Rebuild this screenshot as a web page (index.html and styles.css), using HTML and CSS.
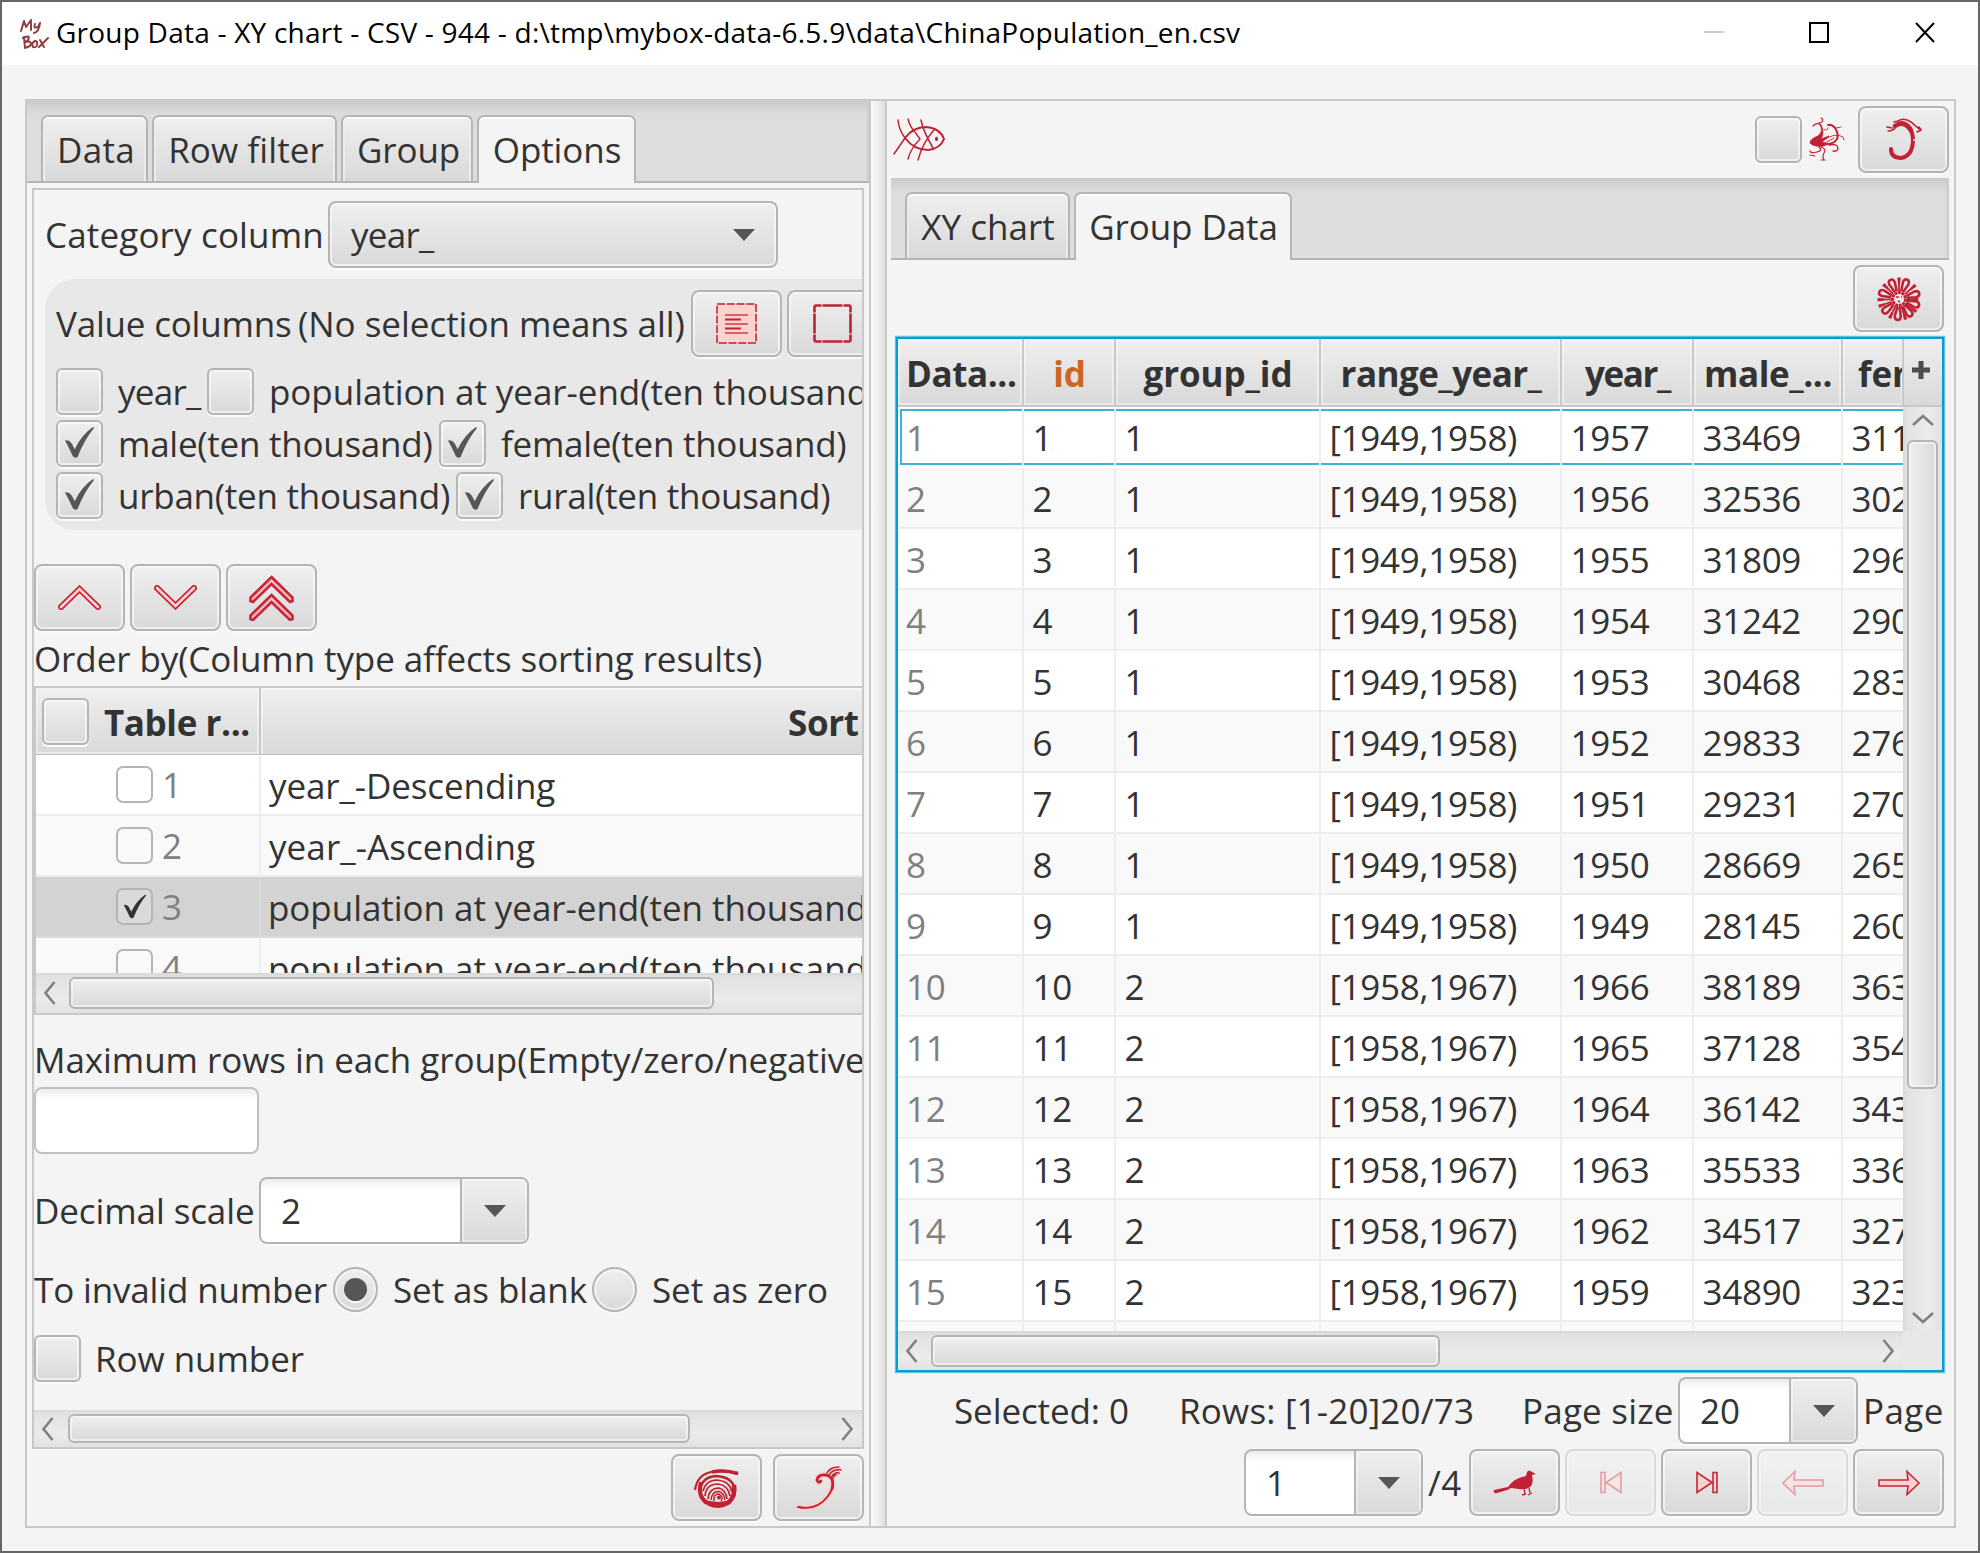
FILE: index.html
```html
<!DOCTYPE html>
<html lang="en">
<head>
<meta charset="utf-8">
<title>Group Data</title>
<link rel="stylesheet" href="styles.css">
</head>
<body>
<svg width="0" height="0" class="defs">
  <defs>
    <symbol id="check" viewBox="0 0 32 34"><path d="M1 15 Q5 14 8 18 L11 24 Q18 9 30 1 L31 2 Q21 14 14 32 Q11 34 9 31 Q6 24 1 15z" fill="currentColor"/></symbol>
    <symbol id="left" viewBox="0 0 13 24"><path d="M11.500 1 L2.500 12 L11.500 23" fill="none" stroke="#808080" stroke-width="2.600"/></symbol>
    <symbol id="right" viewBox="0 0 13 24"><path d="M1.500 1 L10.500 12 L1.500 23" fill="none" stroke="#808080" stroke-width="2.600"/></symbol>
    <g id="loop"><path d="M-1-8L-3-17Q-3-21 0-21Q3-21 3-17L1-8" fill="none" stroke="#c32034" stroke-width="2.500"/></g>
    <g id="spoke"><path d="M0-8V-19" stroke="#c32034" stroke-width="1.800"/><path d="M-1.800-21.500H1.800L1-15H-1z" fill="#c32034"/></g>
  </defs>
</svg>
<div class="window">
  <header class="titlebar">
    <svg class="logo" width="30" height="32" viewBox="0 0 30 32" fill="none" stroke="#8e3f42" stroke-width="2" stroke-linecap="round" stroke-linejoin="round"><path d="M1 13 L4 3 L6 9 L11 2 L11 12 M15 6 Q13 11 18 9 L20 5 Q19 14 14 15 M4 19 L5 30 M3 20 Q11 16 8 22 L5 24 Q13 22 10 28 L5 30 M15 23 Q11 25 13 29 Q18 30 17 24 Q16 22 14 24 M20 22 L24 29 M28 20 L19 29"/></svg>
    <span class="title">Group Data - XY chart - CSV - 944 - d:\tmp\mybox-data-6.5.9\data\ChinaPopulation_en.csv</span>
    <svg class="winctl" width="232" height="22" viewBox="0 0 232 22" fill="none"><path d="M0 10h20" stroke="#ccc" stroke-width="2"/><path d="M106 1h18v19h-18z" stroke="#000" stroke-width="2"/><path d="M212 1l18 19M230 1l-18 19" stroke="#000" stroke-width="2"/></svg>
  </header>

  <main class="split">
    <section class="left">
      <nav class="tabs">
        <div class="tab w-data">Data</div><div class="tab w-filter">Row filter</div><div class="tab w-group">Group</div><div class="tab on w-options">Options</div>
      </nav>
      <div class="scrollpane">
        <div class="line category"><span class="lab">Category column</span><div class="combo plain"><span class="us">year_</span><i class="arrow"></i></div></div>
        <div class="values">
          <div class="line vhead"><span class="lab v1">Value columns</span><span class="lab v2">(No selection means all)</span>
            <button class="btn"><svg width="41" height="41" viewBox="0 0 41 41"><path d="M1 1h39v39h-39z" fill="#fad3ce"/><path d="M1 1h39v39h-39z" fill="none" stroke="#d2495a" stroke-width="2" stroke-dasharray="8 1.750"/><path d="M9 12h23M9 21h23M9 30h23" stroke="#d96070" stroke-width="2"/><path d="M9 16.500h16M9 25.500h16" stroke="#c32034" stroke-width="1.800"/></svg></button>
            <button class="btn"><svg width="39" height="39" viewBox="0 0 39 39"><path d="M1.500 1.500h36v36h-36z" fill="none" stroke="#c32034" stroke-width="2.600" stroke-dasharray="7 1 20 1 7 0"/></svg></button>
          </div>
          <div class="line cb-row"><i class="cb"></i><span class="clab c-year us">year_</span><i class="cb"></i><span class="clab c-pop">population at year-end(ten thousand</span></div>
          <div class="line cb-row"><i class="cb"><svg width="31" height="33"><use href="#check"/></svg></i><span class="clab c-male">male(ten thousand)</span><i class="cb"><svg width="31" height="33"><use href="#check"/></svg></i><span class="clab">female(ten thousand)</span></div>
          <div class="line cb-row"><i class="cb"><svg width="31" height="33"><use href="#check"/></svg></i><span class="clab c-urban">urban(ten thousand)</span><i class="cb"><svg width="31" height="33"><use href="#check"/></svg></i><span class="clab">rural(ten thousand)</span></div>
        </div>
        <div class="line order-btns">
          <button class="btn"><svg width="43" height="25" viewBox="0 0 43 25" fill="none" stroke-linecap="round"><path d="M3 22L21.500 4L40 22" stroke="#c8253a" stroke-width="6"/><path d="M3 22L21.500 4L40 22" stroke="#fad3ce" stroke-width="2.600"/></svg></button>
          <button class="btn"><svg width="43" height="25" viewBox="0 0 43 25" fill="none" stroke-linecap="round"><path d="M3 3L21.500 21L40 3" stroke="#c8253a" stroke-width="6"/><path d="M3 3L21.500 21L40 3" stroke="#fad3ce" stroke-width="2.600"/></svg></button>
          <button class="btn"><svg width="45" height="46" viewBox="0 0 45 46" fill="#f6bdba" stroke="#c8253a" stroke-width="2.600"><path d="M22.500 2L43.500 22.500V26L41 27L22.500 9L4 27L1.500 26V22.500z"/><path d="M22.500 20L43.500 40.500V44L41 45L22.500 27L4 45L1.500 44V40.500z"/></svg></button>
        </div>
        <div class="caption">Order by(Column type affects sorting results)</div>
        <div class="sort-table">
          <div class="sort-head"><div class="sh1"><i class="cb"></i><b>Table r...</b></div><div class="sh2"><b>Sort</b></div></div>
          <div class="sort-body">
            <div class="srow"><div class="sc1"><i class="scb"></i>1</div><div class="sc2">year_-Descending</div></div>
            <div class="srow even"><div class="sc1"><i class="scb"></i>2</div><div class="sc2 asc">year_-Ascending</div></div>
            <div class="srow sel"><div class="sc1"><i class="scb"><svg width="24" height="27"><use href="#check"/></svg></i>3</div><div class="sc2 pop">population at year-end(ten thousand</div></div>
            <div class="srow even"><div class="sc1"><i class="scb"></i>4</div><div class="sc2 pop">population at year-end(ten thousand</div></div>
          </div>
          <div class="hscroll h40"><svg width="13" height="24"><use href="#left"/></svg><div class="thumb t1"></div></div>
        </div>
        <div class="caption max">Maximum rows in each group(Empty/zero/negative</div>
        <div class="field"></div>
        <div class="line gap23"><span class="lab l-dec">Decimal scale</span><div class="combo edit"><span>2</span><div class="drop"><i class="arrow"></i></div></div></div>
        <div class="line gap23 invalid"><span class="lab l-inv">To invalid number</span><i class="radio on"></i><span class="rlab r1">Set as blank</span><i class="radio"></i><span class="rlab">Set as zero</span></div>
        <div class="line gap23 rownum"><i class="cb"></i><span class="clab l-row">Row number</span></div>
        <div class="hscroll h37"><svg width="13" height="24"><use href="#left"/></svg><div class="thumb t2"></div><svg class="end" width="13" height="24"><use href="#right"/></svg></div>
      </div>
      <div class="left-actions">
        <button class="btn"><svg width="45" height="40" viewBox="0 0 45 40" fill="none" stroke="#c32034" stroke-linecap="butt"><path d="M1 22Q3 7 17 4Q29 1 44 6" stroke-width="2.200"/><path d="M18 4Q30 1.500 44 5.500" stroke-width="3.400"/><path d="M6 22Q8 9 22 8Q39 9 41 22Q41 32 33 36" stroke-width="2.400"/><path d="M7 14Q3 28 13 35" stroke-width="4"/><path d="M40 17Q42 28 34 35" stroke-width="4.500"/><path d="M9 23Q12 12 23 12Q36 13 38 24" stroke-width="1.700"/><path d="M11 28Q12 16 24 16Q34 17 36 28" stroke-width="1.700"/><path d="M14 31Q15 20 25 20Q32 22 33 31" stroke-width="1.700"/><path d="M17 32Q18 23 25 23.500Q30 25 31 32" stroke-width="1.500"/><path d="M20 33Q19 26 25 26Q30 29 27 33" stroke-width="1.400"/><circle cx="25" cy="29.500" r="2" fill="#c32034" stroke="none"/><path d="M8 31Q12 40 25 40Q36 39 39 31Q25 37 8 31z" fill="#c32034" stroke="none"/></svg></button>
        <button class="btn"><svg width="46" height="46" viewBox="0 0 46 46" fill="none" stroke-linecap="round"><path d="M3 43Q21 44 32 31Q40 20 35 14Q30 7 24 11Q20 14 23 18" stroke="#fad3ce" stroke-width="6"/><path d="M32 9Q36 3 43 4M36 12L42 8" stroke="#fad3ce" stroke-width="5"/><path d="M2 42Q21 46 32 31Q39 21 36 15" stroke="#c32034" stroke-width="1.900"/><path d="M36 24Q39 12 30 10Q22 9 21 15Q22 19 25 16" stroke="#c32034" stroke-width="2.800"/><path d="M31 8Q34 2 43 2M33 10Q37 4 45 5M36 11Q39 7 43 8M37 13Q38 10 40 10" stroke="#c32034" stroke-width="1.500"/></svg></button>
      </div>
    </section>

    <div class="divider"></div>

    <section class="right">
      <div class="topbar">
        <svg width="54" height="46" viewBox="0 0 54 46" fill="none" stroke="#c32034" stroke-linecap="round"><path d="M12 21Q20 10 33 10Q47 11 51 22Q47 32 35 33Q21 33 12 21z" stroke-width="2"/><path d="M5 3Q6 13 12 21M1 37L12 21" stroke-width="1.500"/><path d="M15 2Q17 10 22 15L27 22L21 29Q16 37 15 42" stroke-width="1.400"/><path d="M28 3Q30 14 40 31M41 13Q30 25 25 43" stroke-width="1.500"/><ellipse cx="43.500" cy="22" rx="1.500" ry="2.200" fill="#c32034" stroke="none"/></svg>
        <i class="cb push"></i>
        <svg class="phoenix" width="37" height="46" viewBox="63 17 37 46" fill="none" stroke="#c32034" stroke-linecap="round"><path d="M75 25Q79 31 73 36Q65 39 65 43Q69 47 76 46L81 43L77 42L84 36L76 39Q80 32 76 25z" fill="#c32034" stroke-width=".8"/><path d="M68 26Q72 22 76 25M76 18Q79 19 77 22L74 23" stroke-width="1.200"/><path d="M83 25Q87 24 90 28Q94 34 92 39Q89 44 82 44L76 46" stroke-width="2"/><path d="M79 29Q82 32 83 28M79 40Q90 32 98 37L99 40M91 28L96 27M80 43L89 38" stroke-width=".9"/><path d="M84 45Q93 43 93 49Q92 52 88 51" stroke-width="1.300"/><path d="M76 47Q82 49 79 53Q77 57 79 60M76 60L80 60M74 47Q78 51 72 52Q66 54 65 51M65 55L70 56" stroke-width="1.200"/></svg>
        <button class="btn dragon"><svg width="36" height="43" viewBox="142 18 36 43" fill="none" stroke="#c32034" stroke-linecap="round"><path d="M147 49Q147 58 157 58Q169 56 169 39Q168 25 158 23" stroke-width="4"/><path d="M151 26Q159 20 166 29" stroke-width="4.500"/><path d="M143 27L148 28M144 31Q150 31 152 26M150 22L154 21Q160 17 167 22L175 29M175 27L177 30L173 32" stroke-width="1.600"/><circle cx="170" cy="40" r="1" fill="#eee" stroke="none"/></svg></button>
      </div>
      <nav class="tabs tabs-r"><div class="tab w-xy">XY chart</div><div class="tab on w-gd">Group Data</div></nav>
      <div class="toolbar"><button class="btn"><svg width="46" height="46" viewBox="-23 -23 46 46">
        <use href="#spoke"/><use href="#loop" transform="rotate(23)"/><use href="#spoke" transform="rotate(50)"/><use href="#loop" transform="rotate(74)"/><use href="#spoke" transform="rotate(92) scale(.9)"/><use href="#loop" transform="rotate(108)"/><use href="#spoke" transform="rotate(126)"/><use href="#loop" transform="rotate(144)"/><use href="#spoke" transform="rotate(162)"/><use href="#loop" transform="rotate(184)"/><use href="#spoke" transform="rotate(206)"/><use href="#loop" transform="rotate(230)"/><use href="#spoke" transform="rotate(250)"/><use href="#spoke" transform="rotate(268)"/><use href="#loop" transform="rotate(290)"/><use href="#spoke" transform="rotate(313)"/><use href="#loop" transform="rotate(336)"/>
        <circle r="6.500" stroke="#c32034" stroke-width="3" stroke-dasharray="3 .6" fill="#f4e9e9"/><path d="M-3-2H0M2-2H3M-1 2L1 3" stroke="#c32034" stroke-width="1.500"/></svg></button></div>
      <div class="table">
        <div class="thead">
          <div class="row">
            <b class="th first">Data...</b><b class="th key">id</b><b class="th">group_id</b><b class="th us2">range_year_</b><b class="th us">year_</b><b class="th first m">male_...</b><b class="th fem">fem</b>
          </div>
          <div class="plus"><svg width="18" height="18" viewBox="0 0 18 18"><path d="M6.500 0h5v6.500H18v5h-6.500V18h-5v-6.500H0v-5h6.500z" fill="#4d4d4d"/></svg></div>
        </div>
        <div class="tmid">
          <div class="tbody">
            <div class="row focus"><span>1</span><span>1</span><span>1</span><span>[1949,1958)</span><span>1957</span><span>33469</span><span>311</span></div>
            <div class="row"><span>2</span><span>2</span><span>1</span><span>[1949,1958)</span><span>1956</span><span>32536</span><span>302</span></div>
            <div class="row"><span>3</span><span>3</span><span>1</span><span>[1949,1958)</span><span>1955</span><span>31809</span><span>296</span></div>
            <div class="row"><span>4</span><span>4</span><span>1</span><span>[1949,1958)</span><span>1954</span><span>31242</span><span>290</span></div>
            <div class="row"><span>5</span><span>5</span><span>1</span><span>[1949,1958)</span><span>1953</span><span>30468</span><span>283</span></div>
            <div class="row"><span>6</span><span>6</span><span>1</span><span>[1949,1958)</span><span>1952</span><span>29833</span><span>276</span></div>
            <div class="row"><span>7</span><span>7</span><span>1</span><span>[1949,1958)</span><span>1951</span><span>29231</span><span>270</span></div>
            <div class="row"><span>8</span><span>8</span><span>1</span><span>[1949,1958)</span><span>1950</span><span>28669</span><span>265</span></div>
            <div class="row"><span>9</span><span>9</span><span>1</span><span>[1949,1958)</span><span>1949</span><span>28145</span><span>260</span></div>
            <div class="row"><span>10</span><span>10</span><span>2</span><span>[1958,1967)</span><span>1966</span><span>38189</span><span>363</span></div>
            <div class="row"><span>11</span><span>11</span><span>2</span><span>[1958,1967)</span><span>1965</span><span>37128</span><span>354</span></div>
            <div class="row"><span>12</span><span>12</span><span>2</span><span>[1958,1967)</span><span>1964</span><span>36142</span><span>343</span></div>
            <div class="row"><span>13</span><span>13</span><span>2</span><span>[1958,1967)</span><span>1963</span><span>35533</span><span>336</span></div>
            <div class="row"><span>14</span><span>14</span><span>2</span><span>[1958,1967)</span><span>1962</span><span>34517</span><span>327</span></div>
            <div class="row"><span>15</span><span>15</span><span>2</span><span>[1958,1967)</span><span>1959</span><span>34890</span><span>323</span></div>
            <div class="row"><span></span><span></span><span></span><span></span><span></span><span></span><span></span></div>
          </div>
          <div class="vscroll">
            <svg width="22" height="12" viewBox="0 0 22 12"><path d="M1 11L11 2L21 11" fill="none" stroke="#808080" stroke-width="2.600"/></svg>
            <div class="vthumb"></div>
            <svg class="vend" width="22" height="12" viewBox="0 0 22 12"><path d="M1 1L11 10L21 1" fill="none" stroke="#808080" stroke-width="2.600"/></svg>
          </div>
        </div>
        <div class="tfoot"><div class="hscroll h39"><svg width="13" height="24"><use href="#left"/></svg><div class="thumb t3"></div><svg class="end" width="13" height="24"><use href="#right"/></svg></div></div>
      </div>
      <div class="foot f1">
        <span class="f-sel">Selected: 0</span><span class="f-rows">Rows: [1-20]20/73</span><span class="f-ps">Page size</span>
        <div class="combo edit size"><span>20</span><div class="drop"><i class="arrow"></i></div></div><span class="f-page">Page</span>
      </div>
      <div class="foot f2">
        <div class="combo edit page"><span>1</span><div class="drop"><i class="arrow"></i></div></div><span class="f-of">/4</span>
        <button class="btn"><svg width="44" height="27" viewBox="0 0 44 27"><path d="M1 21L15 18Q21 9 33 7L34 3Q36 0 39 3L43 5L39 6Q41 15 37 18Q33 21 26 20L18 19L14 21L4 24Q0 25 1 21z" fill="#c32034"/><path d="M31 20L32 25M36 19L37 24M29 26L33 25M35 26L39 24" stroke="#c32034" stroke-width="1.300"/></svg></button>
        <button class="btn off"><svg width="22" height="27" viewBox="0 -2.500 22 27" fill="#fad3ce" stroke="#c8253a" stroke-width="1.600"><path d="M1 1h4v20h-4zM21 1v20L6 11z"/></svg></button>
        <button class="btn"><svg width="22" height="27" viewBox="0 -2.500 22 27" fill="#fad3ce" stroke="#c8253a" stroke-width="1.600"><path d="M17 1h4v20h-4zM1 1v20L16 11z"/></svg></button>
        <button class="btn off"><svg width="42" height="26" viewBox="0 0 42 26" fill="#fad3ce" stroke="#c8253a" stroke-width="1.600"><path d="M1 13L13 1.500L12 10H41V16H12L13 24.500z"/></svg></button>
        <button class="btn"><svg width="42" height="26" viewBox="0 0 42 26" fill="#fad3ce" stroke="#c8253a" stroke-width="1.600"><path d="M41 13L29 1.500L30 10H1V16H30L29 24.500z"/></svg></button>
      </div>
    </section>
  </main>
</div>
</body>
</html>
```
FILE: styles.css
```css
* { box-sizing: border-box; }
body { margin: 0; width: 1980px; height: 1553px; overflow: hidden; font-family: "Open Sans", "Noto Sans", sans-serif; font-size: 35px; letter-spacing: -0.1px; color: #333; white-space: nowrap; }
svg, i { display: block; flex: none; }
.defs { position: absolute; }
.window { width: 1980px; height: 1553px; border: 2px solid #666; background: #f4f4f4; display: flex; flex-direction: column; }
.titlebar { height: 63px; flex: none; background: #fff; display: flex; align-items: center; padding-left: 18px; color: #000; }
.logo { margin-right: 6px; }
.title { font-size: 28px; letter-spacing: 0.23px; line-height: 61px; height: 63px; }
.winctl { margin: -2px 42px 0 auto; }

.split { display: flex; margin: 34px 22px 0 23px; height: 1429px; border: 2px solid #c8c8c8; }
.left { width: 842px; flex: none; display: flex; flex-direction: column; }
.divider { width: 18px; flex: none; border: solid #c8c8c8; border-width: 0 2px; background: linear-gradient(90deg, #fafafa, #f0f0f0 40%, #dedede); }
.right { flex: 1; min-width: 0; display: flex; flex-direction: column; }

.tabs { height: 82px; flex: none; display: flex; gap: 4px; padding: 14px 0 0 14px; background: linear-gradient(#cbcbcb, #ddd 14px); box-shadow: inset 0 -2px 0 #b5b5b5, inset -3px 0 2px -1px #ccc; }
.tab { height: 66px; line-height: 66px; text-align: center; padding-left: 3px; border: 2px solid #b5b5b5; border-bottom: 0; border-radius: 7px 7px 0 0; background: linear-gradient(#efefef, #d9d9d9); box-shadow: inset 0 2px 0 #fafafa, inset 2px 0 0 #ececec, inset -2px 0 0 #ececec; }
.tab.on { height: 68px; background: #f4f4f4; box-shadow: inset 0 2px 0 #fff; }
.w-data { width: 107px; letter-spacing: 0.3px; } .w-filter { width: 185px; letter-spacing: 0.1px; } .w-group { width: 132px; } .w-options { width: 159px; padding-left: 1px; }
.tabs-r { margin: 0 5px 0 4px; }
.tabs-r .tab { padding-left: 1px; }
.w-xy { width: 165px; letter-spacing: 0.02px; } .w-gd { width: 218px; }

.scrollpane { margin: 5px 5px 0; height: 1261px; flex: none; border: 2px solid #c8c8c8; overflow: hidden; display: flex; flex-direction: column; }
.scrollpane > * { flex: none; }
.line { display: flex; align-items: center; }
.lab { flex: none; }
.btn { font: inherit; width: 91px; height: 67px; flex: none; padding: 0; border: 2px solid #b5b5b5; border-radius: 8px; background: linear-gradient(#efefef, #d9d9d9); box-shadow: inset 0 0 0 2px rgba(250,250,250,.65), 0 2px 0 #fafafa; display: flex; align-items: center; justify-content: center; }
.btn.off { opacity: .42; }
.category { margin-top: 11px; padding-left: 11px; height: 67px; }
.category .lab { width: 283px; letter-spacing: 0.15px; }
.combo { height: 67px; flex: none; border: 2px solid #b5b5b5; border-radius: 8px; display: flex; align-items: center; justify-content: space-between; box-shadow: 0 2px 0 #fafafa; }
.combo.plain { width: 450px; padding: 0 21px; background: linear-gradient(#efefef, #d9d9d9); box-shadow: inset 0 0 0 2px rgba(250,250,250,.65), 0 2px 0 #fafafa; }
.us { letter-spacing: -0.75px; }
.arrow { border: 11px solid transparent; border-top: 12px solid #565656; border-bottom: 0; }
.combo.edit { width: 270px; background: linear-gradient(#ececec, #fff 10px); overflow: hidden; }
.combo.edit > span { padding-left: 20px; }
.drop { width: 67px; height: 100%; border-left: 2px solid #b5b5b5; background: linear-gradient(#efefef, #d9d9d9); box-shadow: inset 0 0 0 2px rgba(250,250,250,.5); display: flex; align-items: center; justify-content: center; }

.values { margin: 11px 0 0 11px; width: 860px; height: 251px; padding: 11px; background: #e8e8e8; border-radius: 30px; }
.vhead { height: 67px; margin-bottom: 11px; }
.v1 { width: 242px; letter-spacing: -0.2px; }
.v2 { width: 393px; letter-spacing: -0.03px; }
.vhead .btn { margin-right: 5px; }
.cb { width: 47px; height: 47px; border: 2px solid #b5b5b5; border-radius: 6px; background: linear-gradient(#efefef, #d9d9d9); box-shadow: inset 0 0 0 2px rgba(250,250,250,.65), 0 2px 0 #fafafa; display: flex; align-items: center; justify-content: center; color: #565656; }
.cb svg { margin-bottom: 2px; }
.cb-row { height: 47px; margin-bottom: 5px; }
.clab { padding-left: 15px; flex: none; letter-spacing: -0.26px; }
.c-year { width: 104px; padding-left: 15px; letter-spacing: -0.75px; } .c-male { width: 336px; } .c-urban { width: 353px; } .c-pop { letter-spacing: -0.05px; }

.order-btns { margin-top: 34px; gap: 5px; height: 67px; }
.caption { height: 55px; line-height: 56px; letter-spacing: -0.1px; }
.caption.max { margin-top: 17px; padding-left: 0; letter-spacing: -0.06px; }
.sort-table { height: 329px; border: solid #c8c8c8; border-width: 2px 0 2px 2px; display: flex; flex-direction: column; overflow: hidden; }
.sort-head { display: flex; height: 67px; flex: none; border-bottom: 1px solid #c0c0c0; background: linear-gradient(#efefef, #d9d9d9); }
.sort-head b { letter-spacing: -0.4px; padding-top: 2px; }
.sh1 { width: 225px; flex: none; display: flex; align-items: center; padding-left: 6px; border-right: 2px solid #c8c8c8; box-shadow: inset 0 0 0 2px rgba(250,250,250,.5); }
.sh1 b { padding-left: 15px; }
.sh2 { flex: 1; display: flex; align-items: center; padding-left: 527px; box-shadow: inset 2px 2px 0 rgba(250,250,250,.6); }
.sort-body { height: 218px; flex: none; overflow: hidden; }
.srow { display: flex; height: 61px; background: #fff; border-bottom: 2px solid #ededed; line-height: 62px; }
.srow.even { background: #f9f9f9; }
.srow.sel { background: #d3d3d3; border-color: #dadada; }
.sc1 { width: 225px; flex: none; border-right: 2px solid #ededed; padding-left: 80px; display: flex; align-items: center; gap: 9px; color: #808080; }
.sel .sc1 { border-color: #dadada; }
.sc2 { flex: 1; overflow: hidden; padding-left: 8px; }
.sc2.asc { letter-spacing: 0.08px; }
.sc2.pop { letter-spacing: -0.05px; padding-left: 7px; }
.scb { width: 37px; height: 37px; border: 2px solid #b5b5b5; border-radius: 7px; display: flex; align-items: center; justify-content: center; color: #333; }
.sel .scb { background: #dadada; }
.hscroll { display: flex; align-items: center; flex: none; padding: 0 8px 0 7px; background: linear-gradient(#d8d8d8, #e2e2e2 4px, #ebebeb 65%, #e2e2e2); }
.hscroll .thumb { margin-left: 13px; border: 2px solid #b5b5b5; border-radius: 6px; background: linear-gradient(#efefef, #d9d9d9); box-shadow: inset 0 0 0 2px rgba(250,250,250,.6); }
.end { margin-left: auto; }
.h40 { height: 40px; } .t1 { width: 645px; height: 32px; }
.h37 { height: 37px; margin-top: 28px; } .h37 .thumb { margin-left: 14px; } .t2 { width: 622px; height: 29px; }
.h39 { height: 39px; width: 1005px; } .t3 { width: 509px; height: 32px; }
.field { width: 225px; height: 67px; border: 2px solid #c0c0c0; border-radius: 8px; background: linear-gradient(#ececec, #fff 10px); }
.gap23 { margin-top: 23px; }
.l-dec { width: 225px; } .l-inv { width: 299px; letter-spacing: -0.15px; }
.radio { width: 45px; height: 45px; border: 2px solid #b5b5b5; border-radius: 50%; background: linear-gradient(#efefef, #d9d9d9); box-shadow: inset 0 0 0 2px rgba(250,250,250,.65), 0 2px 0 #fafafa; display: flex; align-items: center; justify-content: center; }
.radio.on::after { content: ""; width: 23px; height: 23px; border-radius: 50%; background: #565656; box-shadow: 0 2px 0 #fafafa; }
.invalid { height: 45px; }
.rlab { padding-left: 15px; } .r1 { width: 214px; }
.rownum { height: 47px; } .l-row { letter-spacing: -0.05px; padding-left: 14px; }
.left-actions { display: flex; justify-content: flex-end; gap: 11px; padding: 5px 5px 0 0; }

.topbar { height: 77px; flex: none; display: flex; align-items: center; padding: 0 5px 0 6px; }
.push { margin-left: auto; }
.phoenix { margin: 0 13px 0 6px; }
.toolbar { height: 72px; flex: none; padding: 5px 10px 0 0; display: flex; justify-content: flex-end; }
.table { margin: 5px 10px 0 9px; height: 1035px; flex: none; border: 2px solid #039ed3; box-shadow: 0 0 0 1px #63c0df, 0 0 0 2px #d5ebf2; display: flex; flex-direction: column; background: #fff; }
.thead { height: 68px; flex: none; display: flex; border-bottom: 2px solid #c8c8c8; background: linear-gradient(#efefef, #d9d9d9); }
.row { display: grid; grid-template-columns: 126px 92px 205px 241px 132px 149px 60px; overflow: hidden; }
.thead .row { width: 1004px; flex: none; }
.th { border-right: 2px solid #c8c8c8; box-shadow: inset 0 0 0 2px rgba(250,250,250,.5); text-align: center; line-height: 70px; padding-left: 1px; overflow: hidden; }
.th.first { text-align: left; padding-left: 8px; letter-spacing: -0.4px; }
.th.first.m { padding-left: 10px; }
.th.key { color: #cd6624; }
.us2 { letter-spacing: -0.55px; }
.th.us { letter-spacing: -1.4px; }
.th.fem { text-align: left; padding-left: 15px; border-right: 0; }
.plus { flex: 1; border-left: 2px solid #c8c8c8; display: flex; justify-content: center; padding: 22px 5px 0 0; }
.tmid { display: flex; height: 924px; flex: none; }
.tbody { width: 1005px; flex: none; overflow: hidden; }
.tbody .row { height: 61px; border-bottom: 2px solid #ededed; line-height: 61px; background: #fff; }
.tbody .row:nth-child(even) { background: #f9f9f9; }
.tbody span { border-right: 2px solid #ededed; padding-left: 8.5px; letter-spacing: -0.3px; overflow: hidden; }
.tbody span:first-child { color: #808080; padding-left: 8px; }
.tbody span:last-child { border-right: 0; }
.tbody .focus { border-bottom-color: #fff; padding: 2px 0 1px; line-height: 57px; }
.focus span { box-shadow: inset 0 2px 0 #3cb2dc, inset 0 -2px 0 #3cb2dc; }
.focus span:first-child { margin-left: 2px; padding-left: 6px; box-shadow: inset 2px 2px 0 #3cb2dc, inset 0 -2px 0 #3cb2dc; }
.vscroll { flex: 1; display: flex; flex-direction: column; align-items: center; padding: 7px 0; background: linear-gradient(90deg, #d8d8d8, #e2e2e2 4px, #ebebeb 65%, #e2e2e2); }
.vthumb { margin-top: 14px; width: 31px; height: 649px; border: 2px solid #b5b5b5; border-radius: 6px; background: linear-gradient(90deg, #efefef, #d9d9d9); box-shadow: inset 0 0 0 2px rgba(250,250,250,.6); }
.vend { margin-top: auto; }
.tfoot { flex: 1; background: #e8e8e8; }
.foot { display: flex; align-items: center; justify-content: flex-end; height: 67px; flex: none; padding-right: 10px; margin-top: 5px; }
.foot > span { flex: none; }
.f-sel { width: 225px; padding-left: 1px; } .f-rows { width: 343px; padding-left: 1px; letter-spacing: 0.2px; } .f-ps { width: 157px; padding-left: 1px; letter-spacing: 0.2px; }
.combo.size { width: 180px; } .f-page { width: 86px; padding-left: 5px; letter-spacing: 0.4px; }
.combo.page { width: 179px; } .f-of { width: 36px; letter-spacing: 0.5px; }
.f2 { gap: 5px; }
```
